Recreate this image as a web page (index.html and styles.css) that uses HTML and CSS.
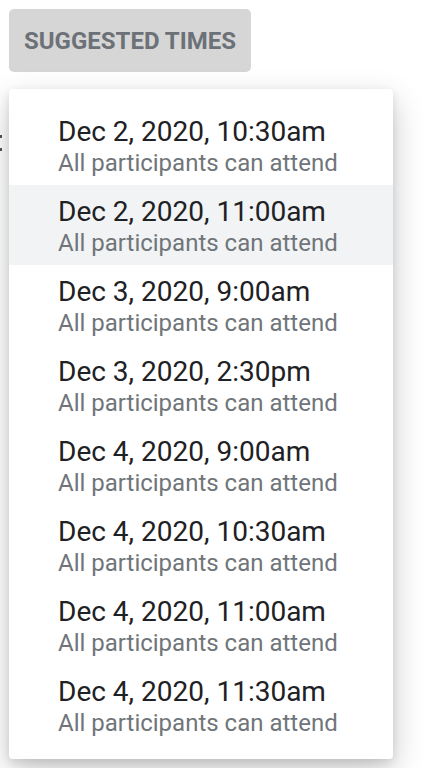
FILE: index.html
```html
<!DOCTYPE html>
<html>
<head>
<meta charset="utf-8">
<link rel="stylesheet" href="styles.css">
</head>
<body>
<div class="page">
  <span class="behind"></span>
  <button class="suggest-btn">SUGGESTED TIMES</button>
  <ul class="menu">
    <li class="item"><span class="title">Dec 2, 2020, 10:30am</span><span class="sub">All participants can attend</span></li>
    <li class="item active"><span class="title">Dec 2, 2020, 11:00am</span><span class="sub">All participants can attend</span></li>
    <li class="item"><span class="title">Dec 3, 2020, 9:00am</span><span class="sub">All participants can attend</span></li>
    <li class="item"><span class="title">Dec 3, 2020, 2:30pm</span><span class="sub">All participants can attend</span></li>
    <li class="item"><span class="title">Dec 4, 2020, 9:00am</span><span class="sub">All participants can attend</span></li>
    <li class="item"><span class="title">Dec 4, 2020, 10:30am</span><span class="sub">All participants can attend</span></li>
    <li class="item"><span class="title">Dec 4, 2020, 11:00am</span><span class="sub">All participants can attend</span></li>
    <li class="item"><span class="title">Dec 4, 2020, 11:30am</span><span class="sub">All participants can attend</span></li>
  </ul>
</div>
</body>
</html>
```
FILE: styles.css
```css
html, body {
  margin: 0;
  padding: 0;
  background: #ffffff;
}
body {
  font-family: Roboto, "Noto Sans", sans-serif;
}
.page {
  position: relative;
  padding: 9px;
  display: flex;
  flex-direction: column;
  align-items: flex-start;
}
.behind::before,
.behind::after {
  content: "";
  position: absolute;
  left: 0;
  width: 2px;
  height: 3px;
  background: #555;
}
.behind::before { top: 135px; }
.behind::after { top: 148px; }
.suggest-btn {
  width: 242px;
  height: 63px;
  border: none;
  border-radius: 5px;
  background: #d6d6d6;
  color: #6c7177;
  font-family: Roboto, sans-serif;
  font-weight: 700;
  font-size: 24px;
  padding: 0;
  margin: 0;
}
.menu {
  list-style: none;
  margin: 17px 0 0 0;
  padding: 16px 0 14px 0;
  width: 384px;
  background: #fff;
  border-radius: 4px;
  box-shadow: 0 12px 32px rgba(0,0,0,0.22), 0 3px 8px rgba(0,0,0,0.1);
  position: relative;
  z-index: 1;
}
.item {
  height: 80px;
  box-sizing: border-box;
  padding: 11px 0 0 49px;
  display: flex;
  flex-direction: column;
}
.item.active {
  background: #f1f3f4;
}
.title {
  font-size: 28px;
  line-height: 32px;
  color: #202124;
}
.sub {
  font-size: 24px;
  line-height: 30px;
  color: #70757a;
}
```
